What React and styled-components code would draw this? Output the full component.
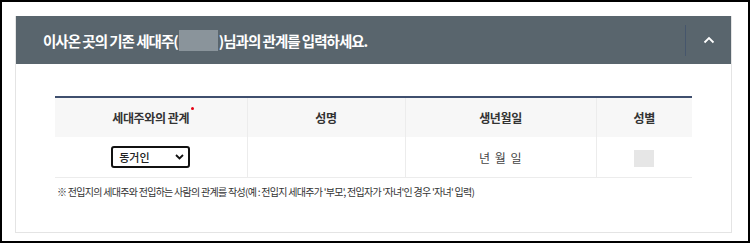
import React from 'react';
import styled, { createGlobalStyle } from 'styled-components';

const GlobalStyle = createGlobalStyle`
  html, body {
    margin: 0;
    padding: 0;
    background: #fff;
  }
  body {
    font-family: "Noto Sans CJK KR", "Noto Sans", sans-serif;
  }
`;

const Frame = styled.div`
  box-sizing: border-box;
  width: 750px;
  height: 243px;
  border: 2px solid #000;
  padding: 14px 16px 0 13px;
`;

const Panel = styled.section`
  border: 1px solid #e4e4e4;
  border-top: 0;
  background: #fff;
`;

const PanelHeader = styled.header`
  display: flex;
  align-items: center;
  height: 48px;
  background: #59656d;
  padding-left: 27px;
`;

const Title = styled.h2`
  flex: 1;
  margin: 0;
  color: #fff;
  font-size: 14.5px;
  font-weight: 700;
  letter-spacing: -1px;
  display: flex;
  align-items: center;
`;

const Masked = styled.span`
  display: inline-block;
  width: 39px;
  height: 21px;
  background: #8a949b;
  margin: 0 1px;
`;

const ToggleButton = styled.button`
  display: flex;
  align-items: center;
  justify-content: center;
  width: 46px;
  height: 31px;
  border: 0;
  border-left: 1px solid #46566c;
  background: transparent;
  padding: 0;
  cursor: pointer;
`;

const PanelBody = styled.div`
  padding: 32px 40px 33px 39px;
`;

const Table = styled.table`
  width: 637px;
  border-collapse: collapse;
  border-top: 2px solid #3f4f6e;
  table-layout: fixed;
`;

const Th = styled.th`
  height: 39px;
  padding: 0;
  background: #f7f7f7;
  color: #333;
  font-size: 12px;
  font-weight: 700;
  letter-spacing: -0.4px;
  border-left: 1px solid #ececec;
  &:first-child { border-left: 0; }
`;

const Td = styled.td`
  height: 40px;
  padding: 0;
  text-align: center;
  color: #444;
  font-size: 12px;
  border-left: 1px solid #ececec;
  border-bottom: 1px solid #ececec;
  &:first-child { border-left: 0; }
`;

const Required = styled.span`
  position: relative;
  &::after {
    content: '';
    position: absolute;
    right: -5px;
    top: -2px;
    width: 3px;
    height: 3px;
    border-radius: 50%;
    background: #e60012;
  }
`;

const SelectBox = styled.div`
  box-sizing: border-box;
  display: inline-flex;
  align-items: center;
  justify-content: space-between;
  width: 79px;
  height: 22px;
  border: 2px solid #111;
  border-radius: 3px;
  padding: 0 4px 0 6px;
  font-size: 11px;
  font-weight: 500;
  color: #222;
  vertical-align: middle;
`;

const DateText = styled.span`
  word-spacing: 1px;
  letter-spacing: 0.5px;
`;

const GenderBox = styled.span`
  display: inline-block;
  width: 20px;
  height: 17px;
  background: #e6e6e6;
  vertical-align: middle;
`;

const Note = styled.p`
  margin: 6px 0 0 2px;
  font-size: 10px;
  color: #333;
  letter-spacing: -0.72px;
`;

function App() {
  return (
    <>
      <GlobalStyle />
      <Frame>
        <Panel>
          <PanelHeader>
            <Title>
              이사온 곳의 기존 세대주(<Masked />)님과의 관계를 입력하세요.
            </Title>
            <ToggleButton aria-label="접기">
              <svg width="12" height="8" viewBox="0 0 12 8">
                <path d="M1.5 6.5 L6 2 L10.5 6.5" fill="none" stroke="#fff" strokeWidth="1.8" />
              </svg>
            </ToggleButton>
          </PanelHeader>
          <PanelBody>
            <Table>
              <colgroup>
                <col style={{ width: 192 }} />
                <col style={{ width: 158 }} />
                <col style={{ width: 191 }} />
                <col style={{ width: 96 }} />
              </colgroup>
              <thead>
                <tr>
                  <Th><Required>세대주와의 관계</Required></Th>
                  <Th>성명</Th>
                  <Th>생년월일</Th>
                  <Th>성별</Th>
                </tr>
              </thead>
              <tbody>
                <tr>
                  <Td>
                    <SelectBox>
                      동거인
                      <svg width="9" height="6" viewBox="0 0 9 6">
                        <path d="M1 1 L4.5 4.5 L8 1" fill="none" stroke="#111" strokeWidth="1.8" />
                      </svg>
                    </SelectBox>
                  </Td>
                  <Td />
                  <Td><DateText>년 월 일</DateText></Td>
                  <Td><GenderBox /></Td>
                </tr>
              </tbody>
            </Table>
            <Note>
              ※ 전입지의 세대주와 전입하는 사람의 관계를 작성(예 : 전입지 세대주가 '부모', 전입자가 '자녀'인 경우 '자녀' 입력)
            </Note>
          </PanelBody>
        </Panel>
      </Frame>
    </>
  );
}

export default App;
